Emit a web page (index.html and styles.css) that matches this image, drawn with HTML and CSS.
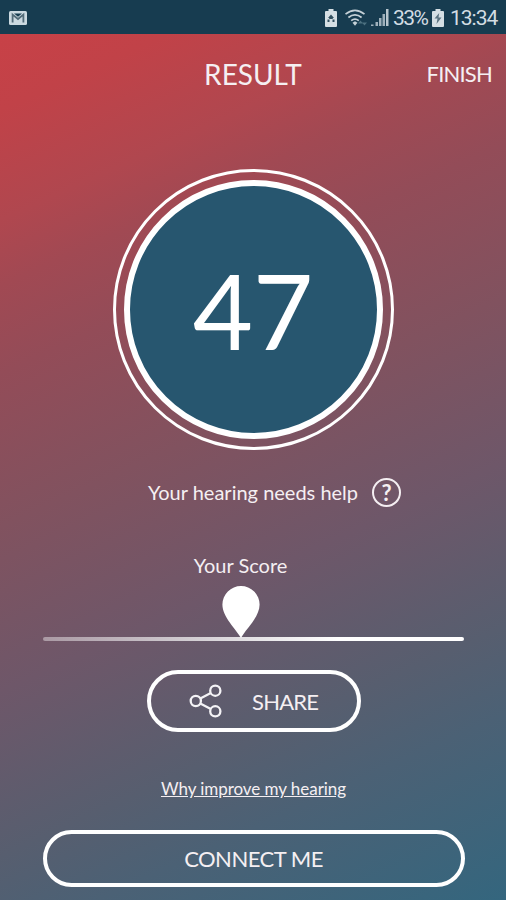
FILE: index.html
```html
<!DOCTYPE html>
<html lang="en">
<head>
<meta charset="utf-8">
<title>Result</title>
<link rel="stylesheet" href="styles.css">
</head>
<body>
<div class="status">
  <svg class="mail" width="18" height="14" viewBox="0 0 18 14"><rect width="18" height="14" rx="1.5" fill="#cbd9e0"/><path d="M3.600 11.500V3.600L9 8l5.400-4.400v7.900" fill="none" stroke="#526b78" stroke-width="1.800"/><path d="M5 2.500h8L9 5.800z" fill="#173d50"/></svg>
  <div class="indicators">
    <svg width="12" height="18" viewBox="0 0 12 18"><path d="M3.500 0h5v2H11q1 0 1 1v14q0 1-1 1H1q-1 0-1-1V3q0-1 1-1h2.500z" fill="#d5dfe4"/><path d="M6 5.500 9 9H7.800v1H4.200V9H3zM2.500 10.500h2V13h-2zm5 0h2V13h-2z" fill="#304f5e"/></svg>
    <svg class="wifi" width="23" height="18" viewBox="0 0 23 18"><g fill="none" stroke="#c5d1d7" stroke-width="1.700"><path d="M.5 5.200q9.500-7.500 19 0M3.400 8.500q6.600-5.300 13.200 0M6.200 11.600q3.800-3 7.600 0"/></g><path d="m7.500 13.700 2.500-1.400 2.500 1.400-2.500 3z" fill="#c5d1d7"/><path d="m13 14.500 2.500-3 2.500 3zm4-1h5l-2.500 3z" fill="#4d7180"/></svg>
    <svg class="signal" width="18" height="17" viewBox="0 0 18 17"><path d="M0 17v-1.500h2.500V17zM4.500 17v-4H7v4zM8 17V9h2.500v8zM11.500 17V5H14v12z" fill="#9fb1bc"/><path d="M15 0h2.500v17H15z" fill="#b8c6ce"/></svg>
    <span class="percent">33%</span>
    <svg class="battery" width="12" height="18" viewBox="0 0 12 18"><path d="M3.500 0h5v2H11q1 0 1 1v14q0 1-1 1H1q-1 0-1-1V3q0-1 1-1h2.500z" fill="#d5dfe4"/><path d="M7.200 4 2.500 9.500h3L4.500 15l5-6.500H6.500z" fill="#5b7380"/></svg>
    <span class="clock">13:34</span>
  </div>
</div>
<main class="screen">
  <header class="header"><span></span><h1 class="title">RESULT</h1><span class="finish">FINISH</span></header>
  <div class="ring"><div class="disc"><span class="number">47</span></div></div>
  <div class="verdict">
    <span>Your hearing needs help</span>
    <span class="help">?</span>
  </div>
  <section class="score">
    <div class="marker">
      <span class="label">Your Score</span>
      <svg width="38" height="52" viewBox="0 0 38 52"><path d="M19 52C14 43 .4 31 .4 18.500a18.600 18.500 0 0 1 37.200 0C37.600 31 24 43 19 52z" fill="#fff"/></svg>
    </div>
    <div class="track"></div>
  </section>
  <div class="share">
    <svg width="34" height="34" viewBox="0 0 34 34" fill="none" stroke="#f4f3f6" stroke-width="2.300"><circle cx="6.800" cy="17" r="5.100"/><circle cx="26.300" cy="6.700" r="5.100"/><circle cx="26.300" cy="27.300" r="5.100"/><path d="m11.300 14.600 10.500-5.500M11.300 19.400l10.500 5.500"/></svg>
    <span>SHARE</span>
  </div>
  <a class="why">Why improve my hearing</a>
  <div class="connect">CONNECT ME</div>
</main>
</body>
</html>
```
FILE: styles.css
```css
* { box-sizing: border-box; }
body {
  margin: 0;
  height: 900px;
  overflow: hidden;
  font-family: Lato, sans-serif;
  color: #f5eff2;
}
svg { display: block; flex: none; }
.status {
  height: 34px;
  background: #173c50;
  display: flex;
  align-items: center;
  justify-content: space-between;
  padding: 1px 10px 0 9px;
}
.indicators {
  display: flex;
  align-items: center;
  color: #d3dde3;
  font: 21px/34px Roboto, sans-serif;
}
.wifi { margin-left: 8px; }
.signal { margin-left: 3px; }
.percent { margin-left: 4px; width: 35px; letter-spacing: -1.5px; }
.battery { margin-left: 4px; }
.clock { margin-left: 6px; width: 46px; letter-spacing: -1px; }
.screen {
  height: 866px;
  display: flex;
  flex-direction: column;
  align-items: center;
  background: linear-gradient(155.5deg, #c84147 0%, #c14248 7%, #b0474f 17%, #a14953 23%, #934c58 31%, #81525f 45%, #6e5769 60%, #575e6f 75%, #4b6175 83%, #34667e 100%);
}
.header {
  width: 100%;
  height: 80px;
  padding: 0 14px;
  display: grid;
  grid-template-columns: 1fr auto 1fr;
  align-items: center;
}
.title { margin: 0; font-size: 28px; font-weight: 400; }
.finish { justify-self: end; margin-bottom: 1px; font-size: 22px; letter-spacing: -.8px; }
.ring {
  width: 281px;
  height: 281px;
  margin-top: 55px;
  padding: 8px;
  border: 3px solid #fff;
  border-radius: 50%;
}
.disc {
  height: 100%;
  border: 6px solid #fff;
  border-radius: 50%;
  background: #27566f;
  display: flex;
  align-items: center;
  justify-content: center;
}
.number { font-size: 104px; line-height: 126px; color: #fff; }
.verdict {
  height: 30px;
  margin: 27px 0 0 43px;
  display: flex;
  align-items: center;
  gap: 14px;
  font-size: 20px;
}
.help {
  width: 29px;
  height: 29px;
  border: 2px solid currentColor;
  border-radius: 50%;
  font-size: 22px;
  font-weight: 700;
  line-height: 25px;
  text-align: center;
}
.score { width: 421px; height: 90px; margin-top: 44px; }
.marker {
  width: 396px;
  height: 87px;
  display: flex;
  flex-direction: column;
  align-items: center;
}
.label { font-size: 20px; line-height: 28px; height: 35px; }
.track { height: 4px; margin-top: -1px; border-radius: 2px; background: linear-gradient(90deg, #fff6, #fff 70%); }
.share {
  width: 214px;
  height: 62px;
  margin: 29px 0 0 2px;
  border: 4px solid #fff;
  border-radius: 31px;
  display: flex;
  align-items: center;
  padding-left: 38px;
  gap: 29px;
  font-size: 22px;
  letter-spacing: -.8px;
}
.why {
  margin: 46px 0 0 1px;
  font-size: 17px;
  letter-spacing: -.05px;
  line-height: 22px;
  text-decoration: underline;
}
.connect {
  width: 422px;
  height: 57px;
  margin: 30px 0 0 1px;
  border: 4px solid #fff;
  border-radius: 29px;
  display: flex;
  align-items: center;
  justify-content: center;
  font-size: 22px;
  letter-spacing: -.5px;
}
```
